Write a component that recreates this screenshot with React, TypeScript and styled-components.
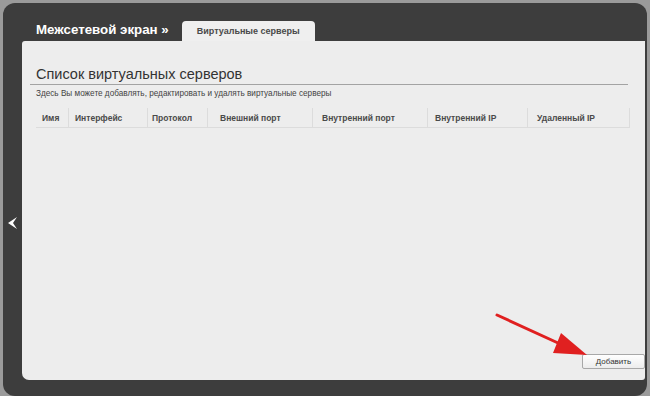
import React from "react";
import styled, { createGlobalStyle } from "styled-components";

const GlobalStyle = createGlobalStyle`
  html, body {
    margin: 0;
    padding: 0;
    background: #9b9b9b;
    font-family: "Liberation Sans", Arial, sans-serif;
    overflow: hidden;
  }
`;

const Frame = styled.div`
  margin: 3px 3px 0 3px;
  height: 393px;
  background: #3d3d3d;
  border-radius: 12px;
  display: flex;
  flex-direction: column;
  box-sizing: border-box;
`;

const Header = styled.div`
  height: 38px;
  display: flex;
  align-items: flex-end;
  padding-left: 33px;
  flex-shrink: 0;
`;

const Title = styled.div`
  color: #ffffff;
  font-size: 13.3px;
  font-weight: bold;
  margin-bottom: 4px;
  margin-right: 13px;
`;

const Tab = styled.div`
  width: 133px;
  height: 20px;
  background: #efefef;
  border-radius: 4px 4px 0 0;
  color: #4a4a4a;
  font-size: 9px;
  font-weight: bold;
  display: flex;
  align-items: center;
  justify-content: center;
`;

const Body = styled.div`
  flex: 1;
  display: flex;
  padding-bottom: 16px;
`;

const Gutter = styled.div`
  width: 19px;
  display: flex;
  align-items: center;
  justify-content: center;
  flex-shrink: 0;
  padding-top: 24px;
`;

const Panel = styled.div`
  flex: 1;
  margin-right: 2px;
  background: #ededed;
  border-radius: 3px 0 3px 7px;
  display: flex;
  flex-direction: column;
  position: relative;
`;

const SectionTitle = styled.div`
  margin: 25px 17px 0 8px;
  padding: 0 0 2px 6px;
  border-bottom: 1px solid #a3a3a3;
  font-size: 14.5px;
  color: #333;
`;

const Description = styled.div`
  padding-left: 14px;
  margin-top: 4px;
  font-size: 8.2px;
  color: #444;
`;

const Table = styled.div`
  margin: 10px 0 0 14px;
  width: 594px;
  display: flex;
  border-bottom: 1px solid #dcdcdc;
`;

const HeadCell = styled.div<{ $w: number; $pad: number }>`
  width: ${(p) => p.$w}px;
  height: 19px;
  box-sizing: border-box;
  padding-left: ${(p) => p.$pad}px;
  display: flex;
  align-items: center;
  font-size: 8.5px;
  font-weight: bold;
  color: #4a4a4a;
  border-right: 1px solid #dcdcdc;
`;

const Footer = styled.div`
  margin-top: auto;
  display: flex;
  justify-content: flex-end;
  padding: 0 0 11px 0;
`;

const Button = styled.button`
  width: 63px;
  height: 15px;
  padding: 0;
  border: 1px solid #a8a8a8;
  border-radius: 2px;
  background: linear-gradient(#ffffff, #ececec);
  font-family: "Liberation Sans", Arial, sans-serif;
  font-size: 8px;
  color: #333;
`;

const Pointer = styled.svg`
  position: absolute;
  left: 471px;
  top: 270px;
  pointer-events: none;
`;

const columns = [
  { name: "Имя", w: 33, pad: 6 },
  { name: "Интерфейс", w: 79, pad: 6 },
  { name: "Протокол", w: 60, pad: 4 },
  { name: "Внешний порт", w: 105, pad: 12 },
  { name: "Внутренний порт", w: 115, pad: 9 },
  { name: "Внутренний IP", w: 100, pad: 7 },
  { name: "Удаленный IP", w: 102, pad: 9 },
];

export default function App() {
  return (
    <>
      <GlobalStyle />
      <Frame>
        <Header>
          <Title>Межсетевой экран »</Title>
          <Tab>Виртуальные серверы</Tab>
        </Header>
        <Body>
          <Gutter>
            <svg width="9" height="12" viewBox="0 0 9 12">
              <polygon points="0,6 9,0 5,6 9,12" fill="#ffffff" />
            </svg>
          </Gutter>
          <Panel>
            <SectionTitle>Список виртуальных серверов</SectionTitle>
            <Description>
              Здесь Вы можете добавлять, редактировать и удалять виртуальные серверы
            </Description>
            <Table>
              {columns.map((c) => (
                <HeadCell key={c.name} $w={c.w} $pad={c.pad}>
                  {c.name}
                </HeadCell>
              ))}
            </Table>
            <Footer>
              <Button>Добавить</Button>
            </Footer>
            <Pointer width="100" height="50" viewBox="0 0 100 50">
              <line x1="4" y1="4" x2="76" y2="37" stroke="#e02020" strokeWidth="3" strokeLinecap="round" />
              <polygon points="68,22 60,42 94,44" fill="#e02020" />
            </Pointer>
          </Panel>
        </Body>
      </Frame>
    </>
  );
}
